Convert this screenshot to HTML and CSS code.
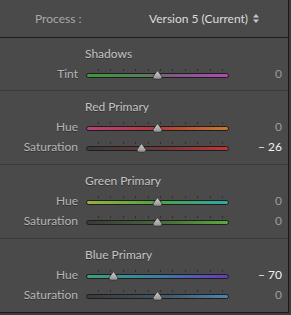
FILE: index.html
```html
<!DOCTYPE html>
<html>
<head>
    <meta charset="UTF-8">
    <title>Camera Calibration</title>
    <link rel="stylesheet" href="styles.css">
</head>
<body>
    <div class="panel">
        <div class="process-row">
            <span class="process-label">Process :</span>
            <span class="process-value">Version 5 (Current)
                <svg class="updown" width="6" height="9" viewBox="0 0 6 9"><path d="M3 0 L6 3.5 H0 Z M0 5.5 H6 L3 9 Z" fill="#c8c8c8"/></svg>
            </span>
        </div>

        <section class="group">
            <div class="group-title">Shadows</div>
            <div class="slider-row">
                <span class="slider-label">Tint</span>
                <div class="slider">
                    <div class="ticks"><i></i><i></i><i></i><i></i><i></i><i></i><i></i><i></i><i></i><i></i><i></i></div>
                    <div class="track tint"></div>
                    <svg class="thumb" style="left: 50%" width="11" height="10" viewBox="0 0 11 10"><path d="M5.5 0.5 L9.8 6.3 Q10.6 8.9 8 9.2 L3 9.2 Q0.4 8.9 1.2 6.3 Z" fill="url(#knob)" stroke="#2a2a2a" stroke-width="0.8"/></svg>
                </div>
                <span class="slider-value">0</span>
            </div>
        </section>

        <section class="group">
            <div class="group-title">Red Primary</div>
            <div class="slider-row">
                <span class="slider-label">Hue</span>
                <div class="slider">
                    <div class="ticks"><i></i><i></i><i></i><i></i><i></i><i></i><i></i><i></i><i></i><i></i><i></i></div>
                    <div class="track red-hue"></div>
                    <svg class="thumb" style="left: 50%" width="11" height="10" viewBox="0 0 11 10"><path d="M5.5 0.5 L9.8 6.3 Q10.6 8.9 8 9.2 L3 9.2 Q0.4 8.9 1.2 6.3 Z" fill="url(#knob)" stroke="#2a2a2a" stroke-width="0.8"/></svg>
                </div>
                <span class="slider-value">0</span>
            </div>
            <div class="slider-row">
                <span class="slider-label">Saturation</span>
                <div class="slider">
                    <div class="ticks"><i></i><i></i><i></i><i></i><i></i><i></i><i></i><i></i><i></i><i></i><i></i></div>
                    <div class="track red-sat"></div>
                    <svg class="thumb" style="left: 38.6%" width="11" height="10" viewBox="0 0 11 10"><path d="M5.5 0.5 L9.8 6.3 Q10.6 8.9 8 9.2 L3 9.2 Q0.4 8.9 1.2 6.3 Z" fill="url(#knob)" stroke="#2a2a2a" stroke-width="0.8"/></svg>
                </div>
                <span class="slider-value changed">&ndash; 26</span>
            </div>
        </section>

        <section class="group">
            <div class="group-title">Green Primary</div>
            <div class="slider-row">
                <span class="slider-label">Hue</span>
                <div class="slider">
                    <div class="ticks"><i></i><i></i><i></i><i></i><i></i><i></i><i></i><i></i><i></i><i></i><i></i></div>
                    <div class="track green-hue"></div>
                    <svg class="thumb" style="left: 50%" width="11" height="10" viewBox="0 0 11 10"><path d="M5.5 0.5 L9.8 6.3 Q10.6 8.9 8 9.2 L3 9.2 Q0.4 8.9 1.2 6.3 Z" fill="url(#knob)" stroke="#2a2a2a" stroke-width="0.8"/></svg>
                </div>
                <span class="slider-value">0</span>
            </div>
            <div class="slider-row">
                <span class="slider-label">Saturation</span>
                <div class="slider">
                    <div class="ticks"><i></i><i></i><i></i><i></i><i></i><i></i><i></i><i></i><i></i><i></i><i></i></div>
                    <div class="track green-sat"></div>
                    <svg class="thumb" style="left: 50%" width="11" height="10" viewBox="0 0 11 10"><path d="M5.5 0.5 L9.8 6.3 Q10.6 8.9 8 9.2 L3 9.2 Q0.4 8.9 1.2 6.3 Z" fill="url(#knob)" stroke="#2a2a2a" stroke-width="0.8"/></svg>
                </div>
                <span class="slider-value">0</span>
            </div>
        </section>

        <section class="group">
            <div class="group-title">Blue Primary</div>
            <div class="slider-row">
                <span class="slider-label">Hue</span>
                <div class="slider">
                    <div class="ticks"><i></i><i></i><i></i><i></i><i></i><i></i><i></i><i></i><i></i><i></i><i></i></div>
                    <div class="track blue-hue"></div>
                    <svg class="thumb" style="left: 19.2%" width="11" height="10" viewBox="0 0 11 10"><path d="M5.5 0.5 L9.8 6.3 Q10.6 8.9 8 9.2 L3 9.2 Q0.4 8.9 1.2 6.3 Z" fill="url(#knob)" stroke="#2a2a2a" stroke-width="0.8"/></svg>
                </div>
                <span class="slider-value changed">&ndash; 70</span>
            </div>
            <div class="slider-row">
                <span class="slider-label">Saturation</span>
                <div class="slider">
                    <div class="ticks"><i></i><i></i><i></i><i></i><i></i><i></i><i></i><i></i><i></i><i></i><i></i></div>
                    <div class="track blue-sat"></div>
                    <svg class="thumb" style="left: 50%" width="11" height="10" viewBox="0 0 11 10"><path d="M5.5 0.5 L9.8 6.3 Q10.6 8.9 8 9.2 L3 9.2 Q0.4 8.9 1.2 6.3 Z" fill="url(#knob)" stroke="#2a2a2a" stroke-width="0.8"/></svg>
                </div>
                <span class="slider-value">0</span>
            </div>
        </section>
    </div>

    <svg width="0" height="0" class="defs">
        <defs>
            <linearGradient id="knob" x1="0" y1="0" x2="0" y2="1">
                <stop offset="0" stop-color="#d4d4d4"/>
                <stop offset="1" stop-color="#8e8e8e"/>
            </linearGradient>
        </defs>
    </svg>
</body>
</html>
```

FILE: styles.css
```css
body {
    margin: 0;
    background: #3c3c3c;
    font-family: 'Lato', sans-serif;
    font-size: 12px;
}

.panel {
    width: 288px;
    background: #4a4a4a;
    border-right: 1px solid #1a1a1a;
    border-bottom: 1px solid #1a1a1a;
}

.process-row {
    display: flex;
    align-items: center;
    height: 37px;
    border-bottom: 1px solid #1c1c1c;
}

.process-label {
    width: 79px;
    padding-left: 35px;
    box-sizing: border-box;
    white-space: nowrap;
    color: #a8a8a8;
}

.process-value {
    margin-left: 70px;
    color: #dcdcdc;
    display: flex;
    align-items: center;
    gap: 5px;
    white-space: nowrap;
}

.group {
    padding: 6px 0 7px;
    border-top: 1px solid #3b3b3b;
}

.group:first-of-type {
    border-top: none;
    padding-bottom: 6px;
}

.group-title {
    height: 20px;
    line-height: 20px;
    padding-left: 85px;
    color: #c4c4c4;
    text-shadow: 0 1px 0 rgba(0, 0, 0, 0.35);
}

.slider-row {
    display: grid;
    grid-template-columns: 78px 143px 45px;
    column-gap: 8px;
    height: 20px;
    line-height: 20px;
}

.slider-label {
    text-align: right;
    color: #b6b6b6;
    text-shadow: 0 1px 0 rgba(0, 0, 0, 0.35);
}

.slider-value {
    text-align: right;
    color: #9c9c9c;
    margin-left: -8px;
}

.slider-value.changed {
    color: #f2f2f2;
}

.slider {
    position: relative;
    padding-top: 5px;
}

.ticks {
    display: flex;
    justify-content: space-between;
    height: 2px;
    margin: 0 6px 2px 12px;
}

.ticks i {
    width: 1px;
    background: #2c2c2c;
}

.track {
    height: 3px;
    border: 1px solid #1e1e1e;
    border-radius: 3px;
}

.tint {
    background: linear-gradient(to right, #3a9a3a, #5e7a5e 45%, #76607a 55%, #b448b4);
}

.red-hue {
    background: linear-gradient(to right, #b8407e, #b8383a 50%, #c87a2c);
}

.red-sat {
    background: linear-gradient(to right, #3a3a3a, #6a3a3a 50%, #c43434);
}

.green-hue {
    background: linear-gradient(to right, #9ab03a, #4ea443 50%, #2ea6a4);
}

.green-sat {
    background: linear-gradient(to right, #3a3a3a, #46643a 50%, #5aaa3a);
}

.blue-hue {
    background: linear-gradient(to right, #3aa07a, #3a7ea6 50%, #6a3ab8);
}

.blue-sat {
    background: linear-gradient(to right, #3a3a3a, #3e5466 50%, #4a86b4);
}

.thumb {
    position: absolute;
    top: 6px;
    margin-left: -5.5px;
}

.defs {
    position: absolute;
}
```
